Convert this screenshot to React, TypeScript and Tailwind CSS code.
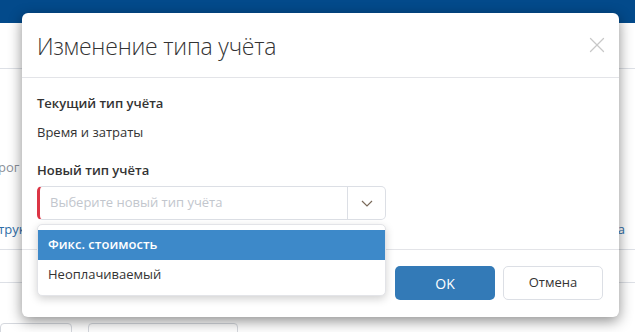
import { X } from 'lucide-react'

const font = { fontFamily: '"Open Sans", "Noto Sans", sans-serif' }

function Background() {
  return (
    <div className="relative h-[332px] w-[635px] overflow-hidden bg-white">
      <div className="h-[23px] bg-[#034a8b]" />
      <div className="mt-[45px] h-px bg-[#dde0e6]" />
      <div className="mt-[89px] text-[13px] text-[#8a9099]">
        <span className="-ml-[10px]">прог</span>
      </div>
      <div className="mt-[42px] flex justify-between text-[13px] text-[#2f6ea8]">
        <span className="-ml-[8px]">структура</span>
        <span className="mr-[10px]">а</span>
      </div>
      <div className="mt-[10px] h-px bg-[#dde0e6]" />
      <div className="mt-[32px] h-px bg-[#dde0e6]" />
      <div className="mt-[40px] flex gap-[16px]">
        <div className="h-[20px] w-[72px] rounded-[4px] border border-[#d5d8de]" />
        <div className="h-[20px] w-[150px] rounded-[4px] border border-[#d5d8de]" />
      </div>
    </div>
  )
}

function Modal() {
  return (
    <div className="absolute left-[22px] top-[13px] flex h-[304px] w-[597px] flex-col rounded-[6px] bg-white shadow-[0_4px_14px_rgba(0,0,0,0.45)]">
      <div className="flex h-[65px] items-center justify-between border-b border-[#e3e4e8] pl-[15px] pr-[9px]">
        <h2 className="mt-[2px] text-[23px] font-light tracking-[-0.2px] text-[#333]">Изменение типа учёта</h2>
        <X className="h-[26px] w-[26px] text-[#c8c8c8]" strokeWidth={1.2} />
      </div>
      <div className="relative flex h-[172px] flex-col border-b border-[#e3e4e8] px-[15px] pt-[16px] text-[13px] text-[#333]">
        <div className="font-semibold leading-[18px]">Текущий тип учёта</div>
        <div className="mt-[11px] leading-[18px]">Время и затраты</div>
        <div className="mt-[20px] font-semibold leading-[18px]">Новый тип учёта</div>
        <div className="mt-[7px] flex h-[34px] w-[349px] overflow-hidden rounded-[5px] border border-l-[3px] border-[#dcdfe5] border-l-[#dc3545]">
          <div className="flex flex-1 items-center pl-[10px] text-[#c2c6cd]">Выберите новый тип учёта</div>
          <div className="flex w-[38px] items-center justify-center border-l border-[#dcdfe5]">
            <svg width="12" height="7" viewBox="0 0 12 7" fill="none">
              <path d="M1 1l5 5 5-5" stroke="#7a6a5a" strokeWidth="1.2" />
            </svg>
          </div>
        </div>
        <div className="absolute left-[15px] top-[146px] z-10 w-[349px] rounded-[5px] border border-[#e3e4e8] bg-white py-[5px] shadow-[0_3px_8px_rgba(0,0,0,0.18)]">
          <div className="flex h-[30px] items-center bg-[#3d89c9] pl-[10px] font-semibold text-white">Фикс. стоимость</div>
          <div className="flex h-[30px] items-center pl-[10px] text-[#333]">Неоплачиваемый</div>
        </div>
      </div>
      <div className="flex flex-1 items-start justify-end gap-[8px] pr-[16px] pt-[16px] text-[13px]">
        <button className="h-[34px] w-[100px] rounded-[5px] bg-[#337ab7] text-[14px] text-white">OK</button>
        <button className="h-[34px] w-[100px] rounded-[5px] border border-[#dcdfe5] bg-white text-[#333]">Отмена</button>
      </div>
    </div>
  )
}

export default function App() {
  return (
    <div className="relative h-[332px] w-[635px] overflow-hidden" style={font}>
      <Background />
      <Modal />
    </div>
  )
}
